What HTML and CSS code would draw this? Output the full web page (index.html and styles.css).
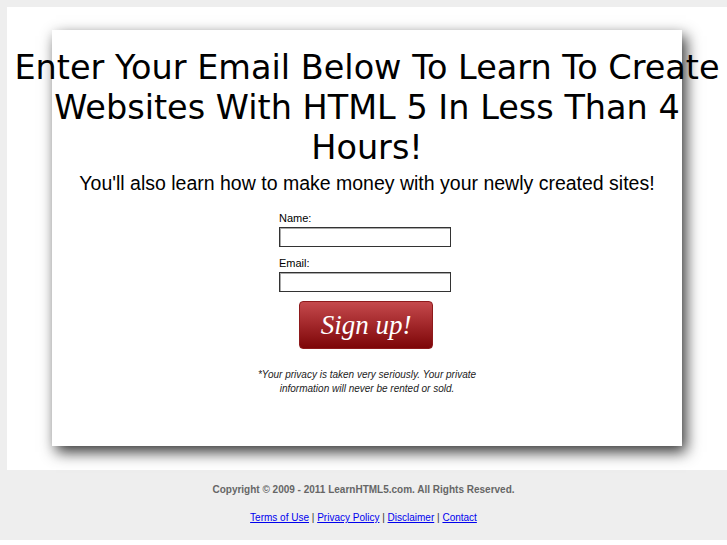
FILE: index.html
```
<!DOCTYPE html>
<html>
<head>
<meta charset="utf-8">
<title>Learn HTML5</title>
<link rel="stylesheet" href="styles.css">
</head>
<body>
<div class="page">
<div class="wrap">
  <div class="card">
    <h1 class="headline">Enter Your Email Below To Learn To Create Websites With HTML 5 In Less Than 4 Hours!</h1>
    <p class="subline">You'll also learn how to make money with your newly created sites!</p>
    <form class="optin">
      <label class="lbl">Name:</label>
      <input class="field" type="text">
      <label class="lbl">Email:</label>
      <input class="field" type="text">
      <button class="signup" type="button">Sign up!</button>
    </form>
    <p class="privacy">*Your privacy is taken very seriously. Your private information will never be rented or sold.</p>
  </div>
</div>
<div class="footer">
  <p class="copy">Copyright © 2009 - 2011 LearnHTML5.com. All Rights Reserved.</p>
  <p class="links"><a href="#">Terms of Use</a> | <a href="#">Privacy Policy</a> | <a href="#">Disclaimer</a> | <a href="#">Contact</a></p>
</div>
</div>
</body>
</html>
```
FILE: styles.css
```
html, body {
  margin: 0;
  padding: 0;
  background: #ffffff;
  overflow: hidden;
}
.page {
  background: #eeeeee;
  padding-top: 7px;
}
.wrap {
  margin: 0 0 0 7px;
  background: #ffffff;
  padding: 23px 0 24px 45px;
}
.card {
  width: 630px;
  height: 416px;
  background: #ffffff;
  box-shadow: 4px 6px 14px rgba(0, 0, 0, 0.8);
  padding-top: 18px;
  box-sizing: border-box;
}
.headline {
  margin: 0 -45px;
  font-family: "DejaVu Sans", sans-serif;
  font-weight: normal;
  font-size: 33.5px;
  line-height: 40px;
  text-align: center;
  color: #000;
}
.subline {
  margin: 3px 0 0;
  font-family: "Liberation Sans", Arial, sans-serif;
  font-size: 19.5px;
  line-height: 24px;
  text-align: center;
  color: #000;
}
.optin {
  width: 172px;
  margin: 16px auto 0;
  padding-left: 0;
  display: flex;
  flex-direction: column;
  align-items: flex-start;
  position: relative;
  left: -2px;
}
.lbl {
  font-family: "Liberation Sans", Arial, sans-serif;
  font-size: 11px;
  line-height: 14px;
  color: #000;
  margin-bottom: 2px;
}
.field {
  width: 172px;
  height: 20px;
  box-sizing: border-box;
  border: 1px solid #333;
  box-shadow: inset 1px 1px 0 #aaa;
  margin: 0 0 9px;
  padding: 0;
  background: #fff;
}
.signup {
  align-self: center;
  width: 134px;
  height: 48px;
  margin: 0 0 0 2px;
  border: 1px solid #8e1a1c;
  border-radius: 4px;
  background: linear-gradient(#c5494c, #a52a2d 45%, #7d0608);
  color: #fff;
  font-family: "Liberation Serif", "Times New Roman", serif;
  font-style: italic;
  font-size: 27px;
  padding: 0;
  cursor: pointer;
}
.privacy {
  width: 230px;
  margin: 19px auto 0;
  font-family: "Liberation Sans", Arial, sans-serif;
  font-style: italic;
  font-size: 10px;
  line-height: 14px;
  text-align: center;
  color: #222;
}
.footer {
  text-align: center;
  font-family: "Liberation Sans", Arial, sans-serif;
  font-size: 10px;
  height: 70px;
  box-sizing: border-box;
  padding: 13px 0 0;
}
.copy {
  margin: 0;
  font-weight: bold;
  color: #666;
  line-height: 14px;
}
.links {
  margin: 14px 0 0;
  line-height: 14px;
  color: #333;
}
.links a {
  color: #0000ee;
}
```
